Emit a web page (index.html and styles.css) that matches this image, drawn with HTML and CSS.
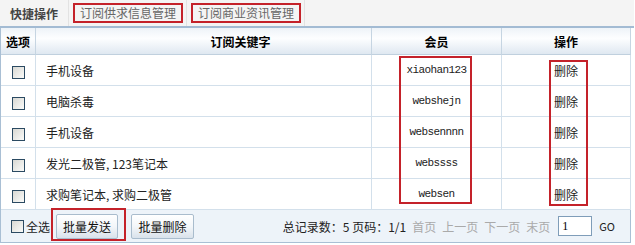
FILE: index.html
```html
<!DOCTYPE html>
<html lang="zh-CN">
<head>
    <meta charset="UTF-8">
    <title>订阅管理</title>
    <link rel="stylesheet" href="styles.css">
</head>
<body>
    <div class="panel">
        <div class="tabs">
            <span class="tab tab-current">快捷操作</span>
            <span class="tab"><span class="tab-link">订阅供求信息管理</span></span>
            <span class="tab"><span class="tab-link">订阅商业资讯管理</span></span>
        </div>

        <table class="grid">
            <colgroup>
                <col class="w-sel">
                <col class="w-key">
                <col class="w-member">
                <col class="w-op">
            </colgroup>
            <thead>
                <tr>
                    <th>选项</th>
                    <th class="th-key">订阅关键字</th>
                    <th>会员</th>
                    <th>操作</th>
                </tr>
            </thead>
            <tbody>
                <tr>
                    <td class="td-sel"><span class="chk"></span></td>
                    <td class="td-key">手机设备</td>
                    <td class="td-member">xiaohan123</td>
                    <td class="td-op">删除</td>
                </tr>
                <tr>
                    <td class="td-sel"><span class="chk"></span></td>
                    <td class="td-key">电脑杀毒</td>
                    <td class="td-member">webshejn</td>
                    <td class="td-op">删除</td>
                </tr>
                <tr>
                    <td class="td-sel"><span class="chk"></span></td>
                    <td class="td-key">手机设备</td>
                    <td class="td-member">websennnn</td>
                    <td class="td-op">删除</td>
                </tr>
                <tr>
                    <td class="td-sel"><span class="chk"></span></td>
                    <td class="td-key">发光二极管, 123笔记本</td>
                    <td class="td-member">webssss</td>
                    <td class="td-op">删除</td>
                </tr>
                <tr>
                    <td class="td-sel"><span class="chk"></span></td>
                    <td class="td-key">求购笔记本, 求购二极管</td>
                    <td class="td-member">websen</td>
                    <td class="td-op">删除</td>
                </tr>
            </tbody>
        </table>

        <div class="footer">
            <span class="chk"></span>
            <span class="check-all">全选</span>
            <button class="btn btn-send">批量发送</button>
            <button class="btn">批量删除</button>
            <div class="pager">
                <span class="pager-info">总记录数：5 页码：1/1</span>
                <span class="pager-link">首页</span>
                <span class="pager-link">上一页</span>
                <span class="pager-link">下一页</span>
                <span class="pager-link">末页</span>
                <input type="text" class="pager-input" value="1">
                <span class="pager-go">GO</span>
            </div>
        </div>

        <!-- 红框标注 -->
        <div class="note note-member"></div>
        <div class="note note-op"></div>
        <div class="note note-send"></div>
    </div>
</body>
</html>
```

FILE: styles.css
```css
body {
    margin: 0;
    background: #fff;
}
.panel {
    position: relative;
    width: 631px;
    font: 12px "Noto Sans CJK SC", sans-serif;
    color: #222;
}
.tabs {
    display: flex;
    height: 26px;
    width: 634px;
    background: #f4f4f4;
    border-bottom: 2px solid #a3bbd3;
}
.tab {
    display: flex;
    align-items: center;
    padding: 0 3px 0 4px;
    border-right: 1px solid #e2e2e2;
}
.tab-current {
    padding: 0 10px;
    font-weight: bold;
    color: #444;
}
.tab-link {
    display: inline-block;
    height: 16px;
    line-height: 16px;
    padding: 0 5px;
    color: #666;
    border: 2px solid #c4222a;
}
.grid {
    width: 631px;
    table-layout: fixed;
    border-collapse: separate;
    border-spacing: 0;
    border-left: 1px solid #a9bfd4;
}
.w-sel { width: 35px; }
.w-key { width: 336px; }
.w-member { width: 130px; }
.w-op { width: 129px; }
.grid th,
.grid td {
    box-sizing: border-box;
    padding: 0;
    border-right: 1px solid #d3e0eb;
    border-bottom: 1px solid #d3e0eb;
}
.grid th {
    height: 27px;
    font-weight: bold;
    color: #000;
    text-align: center;
    background: linear-gradient(to bottom, #eef3f8 0%, #fdfeff 40%, #dfe8f1 100%);
    border-right-color: #c6d5e2;
    border-bottom-color: #c0d0de;
}
.grid th.th-key {
    padding-left: 74px;
}
.grid td {
    height: 31px;
}
.td-sel {
    text-align: center;
}
.td-key {
    padding-left: 10px !important;
}
.td-member {
    text-align: center;
    font-family: "Liberation Mono", monospace;
    font-size: 11px;
    letter-spacing: -0.6px;
}
.td-op {
    text-align: center;
}
.chk {
    display: inline-block;
    width: 13px;
    height: 13px;
    box-sizing: border-box;
    border: 1px solid #2b4a62;
    background: linear-gradient(135deg, #d8d8d3, #fbfbf9);
    vertical-align: middle;
}
.footer {
    display: flex;
    align-items: center;
    height: 32px;
    padding-left: 10px;
    background: #edf3f9;
    border: 1px solid #a9bfd4;
    border-top: none;
}
.check-all {
    margin-left: 2px;
}
.btn {
    height: 25px;
    padding: 0;
    width: 62px;
    margin-left: 6px;
    font: 12px "Noto Sans CJK SC", sans-serif;
    color: #111;
    background: linear-gradient(to bottom, #ffffff, #f3f6f9 50%, #d9e2eb);
    border: 1px solid #a9bccd;
    border-radius: 2px;
}
.btn + .btn {
    margin-left: 13px;
    width: 63px;
}
.pager {
    display: flex;
    align-items: center;
    gap: 6px;
    margin-left: auto;
    padding-right: 15px;
}
.pager-link {
    color: #aaa;
}
.pager-input {
    width: 34px;
    height: 20px;
    box-sizing: border-box;
    margin-left: 2px;
    padding: 0 3px;
    border: 1px solid #7f9db9;
    font: 12px "Liberation Serif", serif;
}
.pager-go {
    font-size: 11px;
    margin-left: 1px;
}
.note {
    position: absolute;
    border: 2px solid #c4222a;
    pointer-events: none;
}
.note-member {
    left: 399px;
    top: 56px;
    width: 69px;
    height: 144px;
}
.note-op {
    left: 549px;
    top: 60px;
    width: 35px;
    height: 142px;
}
.note-send {
    left: 51px;
    top: 208px;
    width: 71px;
    height: 29px;
}
```
